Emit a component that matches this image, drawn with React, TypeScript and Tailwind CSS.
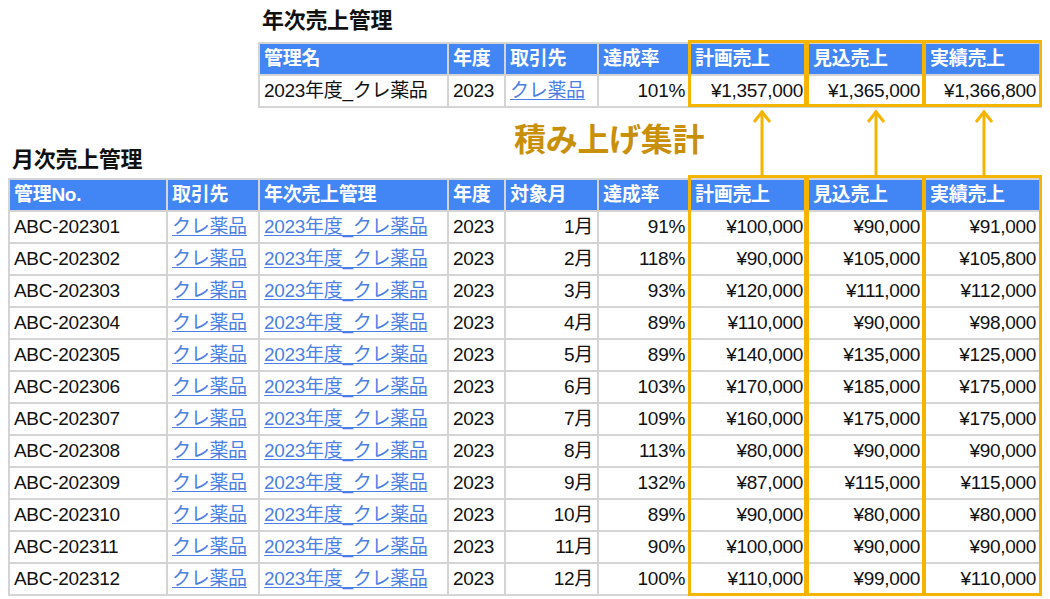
const months = [
  ['ABC-202301', '1月', '91%', '¥100,000', '¥90,000', '¥91,000'],
  ['ABC-202302', '2月', '118%', '¥90,000', '¥105,000', '¥105,800'],
  ['ABC-202303', '3月', '93%', '¥120,000', '¥111,000', '¥112,000'],
  ['ABC-202304', '4月', '89%', '¥110,000', '¥90,000', '¥98,000'],
  ['ABC-202305', '5月', '89%', '¥140,000', '¥135,000', '¥125,000'],
  ['ABC-202306', '6月', '103%', '¥170,000', '¥185,000', '¥175,000'],
  ['ABC-202307', '7月', '109%', '¥160,000', '¥175,000', '¥175,000'],
  ['ABC-202308', '8月', '113%', '¥80,000', '¥90,000', '¥90,000'],
  ['ABC-202309', '9月', '132%', '¥87,000', '¥115,000', '¥115,000'],
  ['ABC-202310', '10月', '89%', '¥90,000', '¥80,000', '¥80,000'],
  ['ABC-202311', '11月', '90%', '¥100,000', '¥90,000', '¥90,000'],
  ['ABC-202312', '12月', '100%', '¥110,000', '¥99,000', '¥110,000'],
]

const th = 'h-[32px] border-2 border-[#d4d4d4] bg-[#4285f4] px-[4px] text-left font-bold text-white whitespace-nowrap'
const td = 'h-[32px] border-2 border-[#d4d4d4] px-[4px] text-[#111] whitespace-nowrap'
const link = 'text-[#4a7fe8] underline underline-offset-2'

function Arrow({ x }: { x: number }) {
  return (
    <svg className="absolute" style={{ left: x - 10, top: 108 }} width="20" height="68">
      <line x1="10" y1="3" x2="10" y2="68" stroke="#f5b400" strokeWidth="3" />
      <polyline points="2,14 10,4 18,14" fill="none" stroke="#f5b400" strokeWidth="3" />
    </svg>
  )
}

export default function App() {
  const font = { fontFamily: '"Liberation Sans", "Noto Sans CJK JP", sans-serif' }
  return (
    <div className="relative h-[599px] w-[1050px] overflow-hidden bg-white text-[19px] tracking-[-0.3px]" style={font}>
      <div className="ml-[258px] pt-[4px]">
        <h2 className="mb-[4px] h-[34px] pl-[4px] text-[22px] font-bold leading-[34px] text-[#111]">年次売上管理</h2>
        <table className="table-fixed border-collapse">
          <colgroup>
            <col className="w-[189px]" /><col className="w-[57px]" /><col className="w-[93px]" /><col className="w-[92px]" />
            <col className="w-[118px]" /><col className="w-[117px]" /><col className="w-[116px]" />
          </colgroup>
          <thead>
            <tr>
              {['管理名', '年度', '取引先', '達成率', '計画売上', '見込売上', '実績売上'].map(h => (
                <th key={h} className={th}>{h}</th>
              ))}
            </tr>
          </thead>
          <tbody>
            <tr>
              <td className={td}>2023年度_クレ薬品</td>
              <td className={td}>2023</td>
              <td className={td}><span className={link}>クレ薬品</span></td>
              <td className={td + ' text-right'}>101%</td>
              <td className={td + ' text-right'}>¥1,357,000</td>
              <td className={td + ' text-right'}>¥1,365,000</td>
              <td className={td + ' text-right'}>¥1,366,800</td>
            </tr>
          </tbody>
        </table>
      </div>

      <div className="ml-[514px] mt-[12px] h-[40px] text-[32px] font-bold leading-[40px] text-[#c8900a]">積み上げ集計</div>

      <div className="ml-[8px] mt-[-16px]">
        <h2 className="mb-[2px] h-[32px] pl-[4px] text-[22px] font-bold leading-[32px] text-[#111]">月次売上管理</h2>
        <table className="table-fixed border-collapse">
          <colgroup>
            <col className="w-[158px]" /><col className="w-[92px]" /><col className="w-[189px]" /><col className="w-[57px]" />
            <col className="w-[93px]" /><col className="w-[92px]" /><col className="w-[118px]" /><col className="w-[117px]" /><col className="w-[116px]" />
          </colgroup>
          <thead>
            <tr>
              {['管理No.', '取引先', '年次売上管理', '年度', '対象月', '達成率', '計画売上', '見込売上', '実績売上'].map(h => (
                <th key={h} className={th}>{h}</th>
              ))}
            </tr>
          </thead>
          <tbody>
            {months.map(m => (
              <tr key={m[0]}>
                <td className={td}>{m[0]}</td>
                <td className={td}><span className={link}>クレ薬品</span></td>
                <td className={td}><span className={link}>2023年度_クレ薬品</span></td>
                <td className={td}>2023</td>
                <td className={td + ' text-right'}>{m[1]}</td>
                <td className={td + ' text-right'}>{m[2]}</td>
                <td className={td + ' text-right'}>{m[3]}</td>
                <td className={td + ' text-right'}>{m[4]}</td>
                <td className={td + ' text-right'}>{m[5]}</td>
              </tr>
            ))}
          </tbody>
        </table>
      </div>

      {/* orange highlight boxes */}
      {[[688, 119], [806, 119], [923, 119]].map(([l, w]) => (
        <div key={l}>
          <div className="absolute top-[40px] h-[67px] border-[3px] border-[#f5b400]" style={{ left: l, width: w }} />
          <div className="absolute top-[175px] h-[421px] border-[3px] border-[#f5b400]" style={{ left: l, width: w }} />
        </div>
      ))}
      <Arrow x={762} />
      <Arrow x={876} />
      <Arrow x={984} />
    </div>
  )
}
